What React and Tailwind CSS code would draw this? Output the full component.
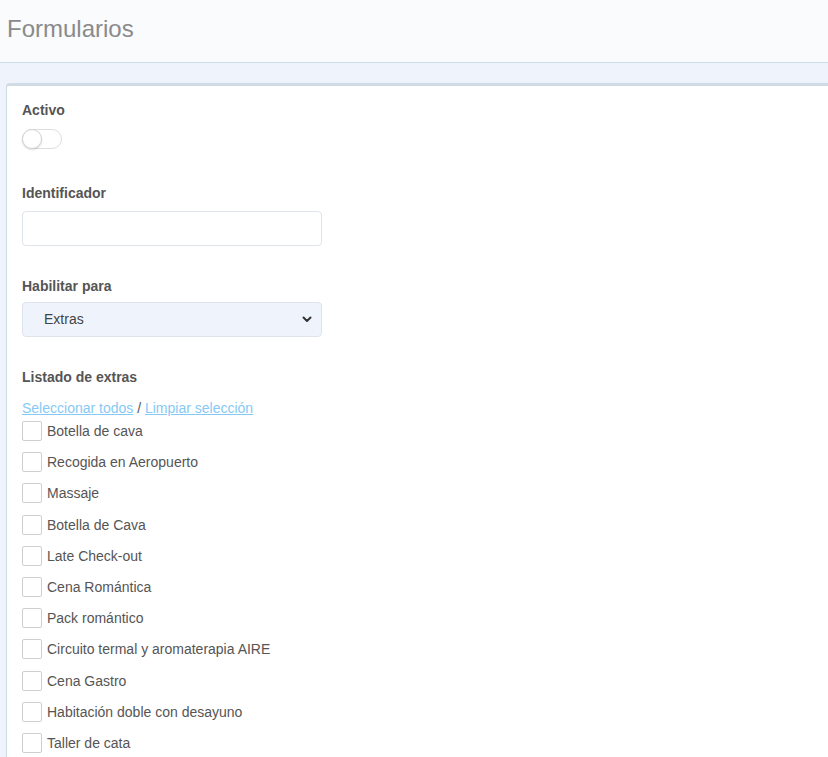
import React from 'react';

const extras = [
  'Botella de cava',
  'Recogida en Aeropuerto',
  'Massaje',
  'Botella de Cava',
  'Late Check-out',
  'Cena Romántica',
  'Pack romántico',
  'Circuito termal y aromaterapia AIRE',
  'Cena Gastro',
  'Habitación doble con desayuno',
  'Taller de cata',
];

const App = () => {
  return (
    <div className="min-h-screen bg-[#eff4fc] font-['Liberation_Sans',Arial,sans-serif]">
      {/* Header */}
      <div className="h-[63px] bg-[#f9fbfd] border-b border-[#cfdbe5] flex items-center px-[7px]">
        <h1 className="text-[24px] text-[#8a8a8a] leading-none -mt-[4px]">Formularios</h1>
      </div>

      <div className="pt-[20px] pl-[6px]">
        <div className="bg-white border-t-[3px] border-l border-[#d0dbe4] rounded-tl-[4px] pl-[15px] pt-[14px] pb-10 min-h-[700px]">
          {/* Activo */}
          <p className="text-[14px] font-bold text-[#555] leading-5">Activo</p>
          <div className="mt-[9px] w-10 h-5 rounded-full border border-[#dedede] bg-white relative">
            <div className="absolute -left-[1px] -top-[1px] w-5 h-5 rounded-full border border-[#d4d4d4] bg-white shadow-[0_1px_2px_rgba(0,0,0,0.15)]"></div>
          </div>

          {/* Identificador */}
          <p className="mt-[34px] text-[14px] font-bold text-[#555] leading-5">Identificador</p>
          <input
            type="text"
            className="mt-[8px] block w-[300px] h-[35px] border border-[#dfe4ea] rounded-[4px] bg-white outline-none px-3 text-[14px]"
          />

          {/* Habilitar para */}
          <p className="mt-[30px] text-[14px] font-bold text-[#555] leading-5">Habilitar para</p>
          <div className="mt-[6px] w-[300px] h-[35px] border border-[#dfe4ea] rounded-[4px] bg-[#eff4fc] flex items-center justify-between pl-[21px] pr-[9px]">
            <span className="text-[14px] text-[#444]">Extras</span>
            <svg width="10" height="7" viewBox="0 0 10 7" fill="none">
              <path d="M1.5 1.5 L5 5 L8.5 1.5" stroke="#333" strokeWidth="2" strokeLinecap="round" strokeLinejoin="round" />
            </svg>
          </div>

          {/* Listado de extras */}
          <p className="mt-[30px] text-[14px] font-bold text-[#555] leading-5">Listado de extras</p>
          <div className="mt-[11px] text-[14px] leading-5 text-[#555]">
            <a className="text-[#87c9f5] underline cursor-pointer">Seleccionar todos</a>
            {' / '}
            <a className="text-[#87c9f5] underline cursor-pointer">Limpiar selección</a>
          </div>
          <div className="mt-[3px] flex flex-col gap-[11.2px]">
            {extras.map((name) => (
              <label key={name} className="flex items-center gap-[5px] text-[14px] text-[#555] leading-5">
                <span className="w-5 h-5 border border-[#cfcfcf] rounded-[2px] bg-white shrink-0"></span>
                {name}
              </label>
            ))}
          </div>
        </div>
      </div>
    </div>
  );
};

export default App;
